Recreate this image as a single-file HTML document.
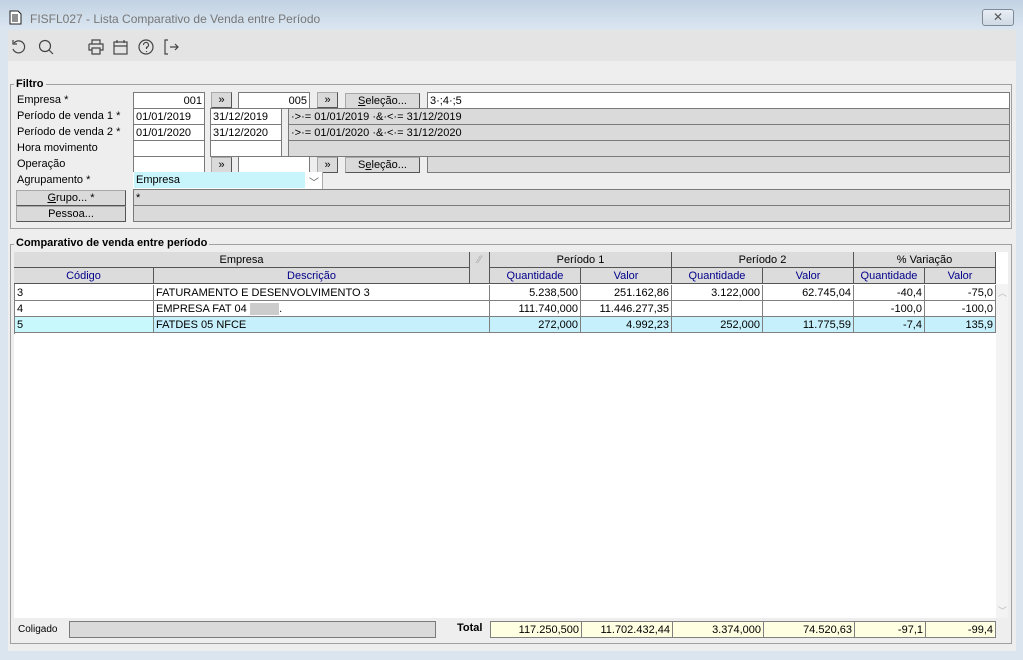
<!DOCTYPE html>
<html><head><meta charset="utf-8"><style>
*{box-sizing:border-box;margin:0;padding:0}
body{width:1023px;height:660px;overflow:hidden;background:#dbe5f0;font-family:"Liberation Sans",sans-serif;font-size:11px;color:#000;position:relative}
.a{position:absolute}
.title{left:0;top:0;width:1023px;height:30px;background:linear-gradient(#c2d2e2,#dbe6f1)}
.tb{left:8px;top:30px;width:1008px;height:31px;background:#e4e4e4}
.ct{left:8px;top:61px;width:1008px;height:590px;background:#eeeeee}
.gb{border:1px solid #a0a0a0}
.gl{font-weight:bold;background:#eeeeee;padding:0 2px}
.lbl{white-space:nowrap;line-height:17px}
.in{background:#fff;border:1px solid #7a7a7a;height:17px;line-height:16px;padding:0 2px;white-space:nowrap;overflow:hidden}
.gr{background:#dadada;border:1px solid #7a7a7a;height:17px;line-height:16px;padding:0 2px;white-space:nowrap;overflow:hidden}
.bt{background:#dadada;border:1px solid #a8a8a8;border-right-color:#555;border-bottom-color:#555;height:16px;line-height:15px;text-align:center}
.h{background:#dcdcdc;border-right:1px solid #555;border-bottom:1px solid #555;text-align:center;line-height:17px;height:16px}
.hb{color:#00008b}
.c{border-right:1px solid #808080;border-bottom:1px solid #808080;height:16px;line-height:17px;padding:0 2px;white-space:nowrap;overflow:hidden}
.r{text-align:right}
.y{background:#ffffe1;border:1px solid #808080;height:17px;line-height:17px;padding:0 2px;text-align:right}
.sel{background:#c6f0fb}
</style></head><body>
<div class="a title"></div>
<svg class="a" style="left:9px;top:10px" width="13" height="15" viewBox="0 0 13 15"><path d="M1 1h8l3 3v10H1z" fill="#fff" stroke="#222"/><path d="M3 5h6M3 7h6M3 9h6M3 11h6" stroke="#222"/></svg>
<div class="a" style="left:30px;top:12px;font-size:12px;color:#777">FISFL027 - Lista Comparativo de Venda entre Período</div>
<div class="a" style="left:982px;top:9px;width:32px;height:17px;border:1px solid #7f8a98;border-radius:3px;background:linear-gradient(#e8eef5,#cfd9e4);text-align:center;line-height:14px;font-size:12px;color:#555">✕</div>
<div class="a tb"></div>
<svg class="a" style="left:10px;top:37px" width="170" height="20" viewBox="0 0 170 20" fill="none" stroke="#444" stroke-width="1.2">
<path d="M4 6a6 6 0 1 1 -1 6"/><path d="M3 3v4h4"/>
<circle cx="35" cy="9" r="5.5"/><path d="M39 13l4 4"/>
<path d="M82 7V3h8v4M79 7h14v6h-3M82 13h-3V7M82 11h8v6h-8z"/>
<rect x="104" y="5" width="13" height="12"/><path d="M104 9h13M107 3v3M114 3v3"/>
<circle cx="136" cy="10" r="7"/><path d="M133.5 8a2.5 2.5 0 1 1 3 2.4v1.6M136.5 14v1"/>
<path d="M158 3h-3v14h3M160 10h8M165 7l3 3-3 3"/>
</svg>
<div class="a ct"></div>
<div class="a gb" style="left:10px;top:84px;width:1002px;height:145px"></div>
<div class="a gl" style="left:14px;top:78px">Filtro</div>
<div class="a lbl" style="left:17px;top:92px">Empresa *</div>
<div class="a lbl" style="left:17px;top:108px">Período de venda 1 *</div>
<div class="a lbl" style="left:17px;top:124px">Período de venda 2 *</div>
<div class="a lbl" style="left:17px;top:140px">Hora movimento</div>
<div class="a lbl" style="left:17px;top:156px">Operação</div>
<div class="a lbl" style="left:17px;top:172px">Agrupamento *</div>
<div class="a in r" style="left:133px;top:92px;width:72px">001</div>
<div class="a bt" style="left:211px;top:92px;width:21px">»</div>
<div class="a in r" style="left:238px;top:92px;width:72px">005</div>
<div class="a bt" style="left:317px;top:92px;width:21px">»</div>
<div class="a bt" style="left:345px;top:93px;width:75px"><u>S</u>eleção...</div>
<div class="a in" style="left:427px;top:92px;width:583px">3·;4·;5</div>
<div class="a in" style="left:133px;top:108px;width:72px">01/01/2019</div>
<div class="a in" style="left:210px;top:108px;width:72px">31/12/2019</div>
<div class="a gr" style="left:288px;top:108px;width:722px">·&gt;·= 01/01/2019 ·&amp;·&lt;·= 31/12/2019</div>
<div class="a in" style="left:133px;top:124px;width:72px">01/01/2020</div>
<div class="a in" style="left:210px;top:124px;width:72px">31/12/2020</div>
<div class="a gr" style="left:288px;top:124px;width:722px">·&gt;·= 01/01/2020 ·&amp;·&lt;·= 31/12/2020</div>
<div class="a in" style="left:133px;top:140px;width:72px"></div>
<div class="a in" style="left:210px;top:140px;width:72px;height:17px"></div>
<div class="a gr" style="left:288px;top:140px;width:722px"></div>
<div class="a in" style="left:133px;top:156px;width:72px"></div>
<div class="a bt" style="left:211px;top:157px;width:21px">»</div>
<div class="a in" style="left:238px;top:156px;width:72px"></div>
<div class="a bt" style="left:317px;top:157px;width:21px">»</div>
<div class="a bt" style="left:345px;top:157px;width:75px">S<u>e</u>leção...</div>
<div class="a gr" style="left:427px;top:156px;width:583px"></div>
<div class="a" style="left:133px;top:172px;width:190px;height:17px;background:#fff;border-right:1px solid #aaa"></div>
<div class="a" style="left:134px;top:172px;width:171px;height:16px;background:#c8f5fc;padding-left:2px;line-height:16px">Empresa</div>
<div class="a" style="left:309px;top:174px;font-size:10px;color:#555">﹀</div>
<div class="a bt" style="left:16px;top:190px;width:110px"><u>G</u>rupo... *</div>
<div class="a gr" style="left:133px;top:189px;width:877px">*</div>
<div class="a bt" style="left:16px;top:206px;width:110px">Pessoa...</div>
<div class="a gr" style="left:133px;top:205px;width:877px"></div>
<div class="a gb" style="left:10px;top:244px;width:1002px;height:400px"></div>
<div class="a gl" style="left:14px;top:237px">Comparativo de venda entre período</div>
<div class="a" style="left:14px;top:252px;width:994px;height:366px;background:#fff"></div>
<div class="a h" style="left:14px;top:252px;width:456px">Empresa</div>
<div class="a h" style="left:470px;top:252px;width:20px;height:32px;color:#aaa">⁄⁄</div>
<div class="a h" style="left:490px;top:252px;width:182px">Período 1</div>
<div class="a h" style="left:672px;top:252px;width:182px">Período 2</div>
<div class="a h" style="left:854px;top:252px;width:142px">% Variação</div>
<div class="a h hb" style="left:14px;top:268px;width:140px">Código</div>
<div class="a h hb" style="left:154px;top:268px;width:316px">Descrição</div>
<div class="a h hb" style="left:490px;top:268px;width:91px">Quantidade</div>
<div class="a h hb" style="left:581px;top:268px;width:91px">Valor</div>
<div class="a h hb" style="left:672px;top:268px;width:91px">Quantidade</div>
<div class="a h hb" style="left:763px;top:268px;width:91px">Valor</div>
<div class="a h hb" style="left:854px;top:268px;width:71px">Quantidade</div>
<div class="a h hb" style="left:925px;top:268px;width:71px">Valor</div>
<div class="a" style="left:14px;top:284px;width:1px;height:50px;background:#808080"></div>
<div class="a c" style="left:15px;top:285px;width:139px">3</div>
<div class="a c" style="left:154px;top:285px;width:336px">FATURAMENTO E DESENVOLVIMENTO 3</div>
<div class="a c r" style="left:490px;top:285px;width:91px">5.238,500</div>
<div class="a c r" style="left:581px;top:285px;width:91px">251.162,86</div>
<div class="a c r" style="left:672px;top:285px;width:91px">3.122,000</div>
<div class="a c r" style="left:763px;top:285px;width:91px">62.745,04</div>
<div class="a c r" style="left:854px;top:285px;width:71px">-40,4</div>
<div class="a c r" style="left:925px;top:285px;width:71px">-75,0</div>
<div class="a c" style="left:15px;top:301px;width:139px">4</div>
<div class="a c" style="left:154px;top:301px;width:336px">EMPRESA FAT 04 <span style="background:#ccc;color:#ccc">XXXX</span>.</div>
<div class="a c r" style="left:490px;top:301px;width:91px">111.740,000</div>
<div class="a c r" style="left:581px;top:301px;width:91px">11.446.277,35</div>
<div class="a c r" style="left:672px;top:301px;width:91px"></div>
<div class="a c r" style="left:763px;top:301px;width:91px"></div>
<div class="a c r" style="left:854px;top:301px;width:71px">-100,0</div>
<div class="a c r" style="left:925px;top:301px;width:71px">-100,0</div>
<div class="a c sel" style="left:15px;top:317px;width:139px;background:#c8f7fc">5</div>
<div class="a c sel" style="left:154px;top:317px;width:336px">FATDES 05 NFCE</div>
<div class="a c r sel" style="left:490px;top:317px;width:91px">272,000</div>
<div class="a c r sel" style="left:581px;top:317px;width:91px">4.992,23</div>
<div class="a c r sel" style="left:672px;top:317px;width:91px">252,000</div>
<div class="a c r sel" style="left:763px;top:317px;width:91px">11.775,59</div>
<div class="a c r sel" style="left:854px;top:317px;width:71px">-7,4</div>
<div class="a c r sel" style="left:925px;top:317px;width:71px">135,9</div>
<div class="a" style="left:996px;top:284px;width:12px;height:334px;background:#f3f3f3"></div>
<div class="a" style="left:998px;top:286px;font-size:9px;color:#bbb">︿</div>
<div class="a" style="left:998px;top:604px;font-size:9px;color:#bbb">﹀</div>
<div class="a lbl" style="left:18px;top:621px;font-size:10px">Coligado</div>
<div class="a gr" style="left:69px;top:621px;width:367px"></div>
<div class="a lbl" style="left:457px;top:620px;font-weight:bold">Total</div>
<div class="a y" style="left:490px;top:621px;width:92px">117.250,500</div>
<div class="a y" style="left:581px;top:621px;width:92px">11.702.432,44</div>
<div class="a y" style="left:672px;top:621px;width:92px">3.374,000</div>
<div class="a y" style="left:763px;top:621px;width:92px">74.520,63</div>
<div class="a y" style="left:854px;top:621px;width:72px">-97,1</div>
<div class="a y" style="left:925px;top:621px;width:71px">-99,4</div>
</body></html>
